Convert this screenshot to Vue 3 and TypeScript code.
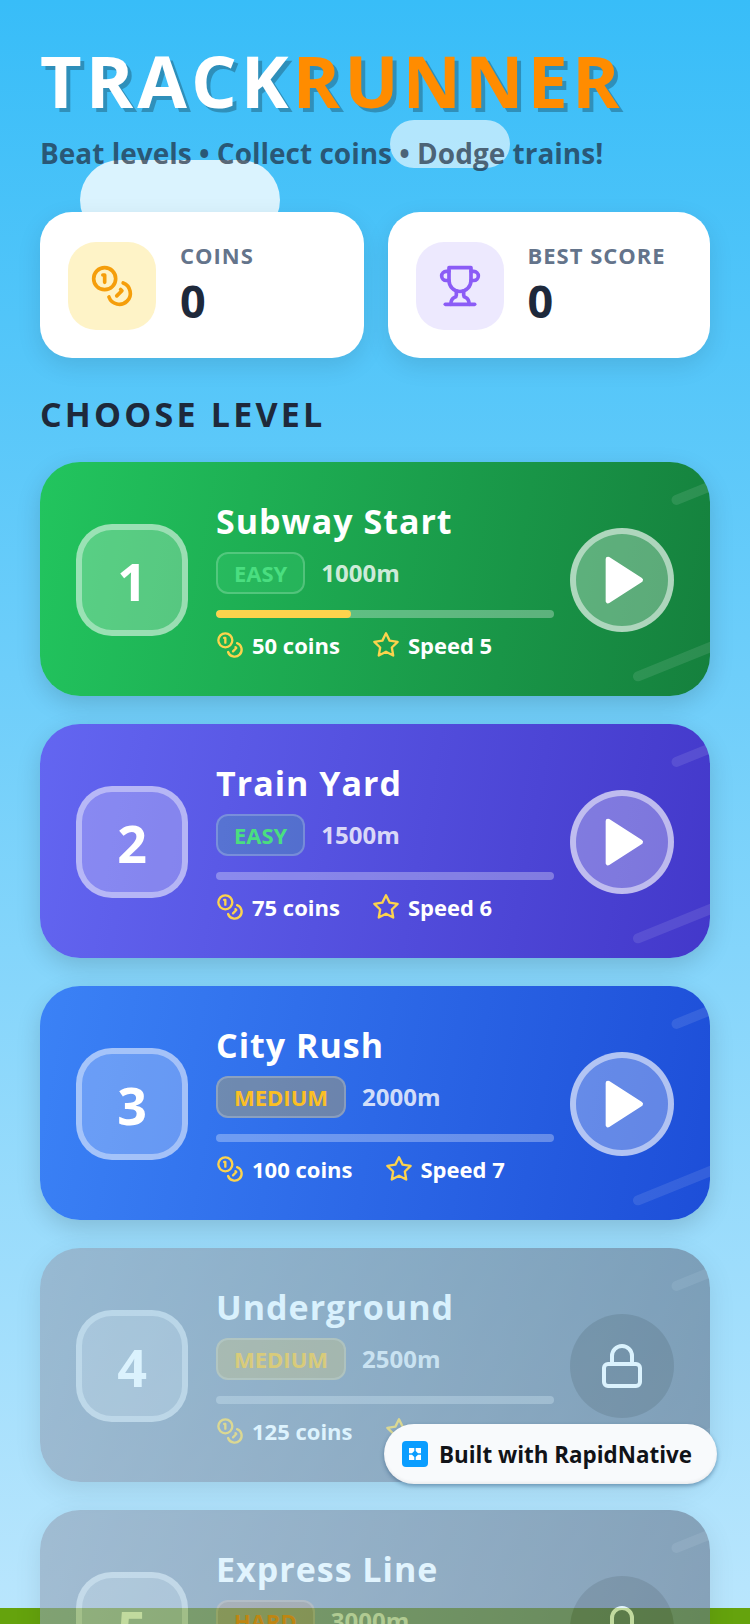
<template>
  <div class="screen">
    <div class="cloud cloud--big"></div>
    <div class="cloud cloud--small"></div>
    <div class="ground"></div>

    <div class="content">
      <header class="header">
        <h1 class="title">TRACK<span class="title__accent">RUNNER</span></h1>
        <p class="subtitle">Beat levels • Collect coins • Dodge trains!</p>
      </header>

      <section class="stats">
        <div class="stat stat--coins">
          <div class="stat__icon stat__icon--coins">
            <svg width="44" height="44" viewBox="0 0 24 24" fill="none" stroke="#f59e0b" stroke-width="2" stroke-linecap="round" stroke-linejoin="round">
              <circle cx="8" cy="8" r="6" />
              <path d="M18.09 10.37A6 6 0 1 1 10.34 18" />
              <path d="M7 6h1v4" />
              <path d="m16.71 13.88.7.71-2.82 2.82" />
            </svg>
          </div>
          <div>
            <div class="stat__label">COINS</div>
            <div class="stat__value">0</div>
          </div>
        </div>
        <div class="stat stat--best">
          <div class="stat__icon stat__icon--best">
            <svg width="44" height="44" viewBox="0 0 24 24" fill="none" stroke="#8b5cf6" stroke-width="2" stroke-linecap="round" stroke-linejoin="round">
              <path d="M6 9H4.5a2.5 2.5 0 0 1 0-5H6" />
              <path d="M18 9h1.5a2.5 2.5 0 0 0 0-5H18" />
              <path d="M4 22h16" />
              <path d="M10 14.66V17c0 .55-.47.98-.97 1.21C7.85 18.75 7 20.24 7 22" />
              <path d="M14 14.66V17c0 .55.47.98.97 1.21C16.15 18.75 17 20.24 17 22" />
              <path d="M18 2H6v7a6 6 0 0 0 12 0V2Z" />
            </svg>
          </div>
          <div>
            <div class="stat__label">BEST SCORE</div>
            <div class="stat__value">0</div>
          </div>
        </div>
      </section>

      <h2 class="section-title">CHOOSE LEVEL</h2>

      <section class="levels">
        <article
          v-for="level in levels"
          :key="level.id"
          class="level"
          :class="[`level--${level.theme}`, { 'level--locked': level.locked }]"
        >
          <span class="streak streak--top"></span>
          <span class="streak streak--bottom"></span>

          <div class="level__number">{{ level.id }}</div>

          <div class="level__info">
            <div class="level__name">{{ level.name }}</div>
            <div class="level__row">
              <span class="tag" :class="`tag--${level.difficulty.toLowerCase()}`">{{ level.difficulty }}</span>
              <span class="level__distance">{{ level.distance }}</span>
            </div>
            <div class="progress">
              <div class="progress__fill" :style="{ width: level.progress + '%' }"></div>
            </div>
            <div class="level__meta">
              <span class="meta">
                <svg width="28" height="28" viewBox="0 0 24 24" fill="none" stroke="#fcd34d" stroke-width="2" stroke-linecap="round" stroke-linejoin="round">
                  <circle cx="8" cy="8" r="6" />
                  <path d="M18.09 10.37A6 6 0 1 1 10.34 18" />
                  <path d="M7 6h1v4" />
                  <path d="m16.71 13.88.7.71-2.82 2.82" />
                </svg>
                {{ level.coins }} coins
              </span>
              <span class="meta">
                <svg width="28" height="28" viewBox="0 0 24 24" fill="none" stroke="#fcd34d" stroke-width="2" stroke-linecap="round" stroke-linejoin="round">
                  <polygon points="12 2 15.09 8.26 22 9.27 17 14.14 18.18 21.02 12 17.77 5.82 21.02 7 14.14 2 9.27 8.91 8.26 12 2" />
                </svg>
                Speed {{ level.speed }}
              </span>
            </div>
          </div>

          <div class="level__action">
            <svg v-if="level.locked" width="48" height="48" viewBox="0 0 24 24" fill="none" stroke="#fff" stroke-width="2" stroke-linecap="round" stroke-linejoin="round">
              <rect x="3" y="11" width="18" height="11" rx="2" ry="2" />
              <path d="M7 11V7a5 5 0 0 1 10 0v4" />
            </svg>
            <svg v-else width="56" height="56" viewBox="0 0 24 24" fill="#fff" stroke="#fff" stroke-width="2" stroke-linecap="round" stroke-linejoin="round">
              <polygon points="6 3 20 12 6 21 6 3" />
            </svg>
          </div>
        </article>
      </section>
    </div>

    <div class="built">
      <span class="built__logo">
        <svg width="26" height="26" viewBox="0 0 26 26">
          <rect width="26" height="26" rx="4" fill="#0a9dff" />
          <path d="M7 7h5.300v3L10 12.300H7ZM13.700 7H19v5.300h-3L13.700 10ZM7 13.700h3L12.300 16v3H7ZM16 13.700h3V19h-5.300v-3Z" fill="#fff" />
        </svg>
      </span>
      <span class="built__text">Built with RapidNative</span>
    </div>
  </div>
</template>

<script setup lang="ts">
interface Level {
  id: number
  name: string
  difficulty: 'EASY' | 'MEDIUM' | 'HARD'
  distance: string
  coins: number
  speed: number
  theme: string
  progress: number
  locked: boolean
}

const levels: Level[] = [
  { id: 1, name: 'Subway Start', difficulty: 'EASY', distance: '1000m', coins: 50, speed: 5, theme: 'green', progress: 40, locked: false },
  { id: 2, name: 'Train Yard', difficulty: 'EASY', distance: '1500m', coins: 75, speed: 6, theme: 'purple', progress: 0, locked: false },
  { id: 3, name: 'City Rush', difficulty: 'MEDIUM', distance: '2000m', coins: 100, speed: 7, theme: 'blue', progress: 0, locked: false },
  { id: 4, name: 'Underground', difficulty: 'MEDIUM', distance: '2500m', coins: 125, speed: 8, theme: 'gray', progress: 0, locked: true },
  { id: 5, name: 'Express Line', difficulty: 'HARD', distance: '3000m', coins: 150, speed: 9, theme: 'gray', progress: 0, locked: true },
]
</script>

<style>
html,
body {
  margin: 0;
  padding: 0;
}
</style>

<style scoped>
.screen {
  position: relative;
  width: 750px;
  height: 1624px;
  overflow: hidden;
  background: linear-gradient(180deg, #38bdf8 0%, #bae6fd 100%);
  font-family: "Open Sans", "Liberation Sans", sans-serif;
}

.cloud {
  position: absolute;
  background: rgba(255, 255, 255, 0.6);
}

.cloud--big {
  left: 80px;
  top: 160px;
  width: 200px;
  height: 80px;
  border-radius: 40px;
  background: rgba(255, 255, 255, 0.8);
}

.cloud--small {
  left: 390px;
  top: 120px;
  width: 120px;
  height: 48px;
  border-radius: 24px;
}

.ground {
  position: absolute;
  left: 0;
  right: 0;
  bottom: 0;
  height: 16px;
  background: #65a30d;
}

.content {
  position: relative;
  padding: 31px 40px 0;
}

.title {
  margin: 0;
  font-size: 72px;
  line-height: 98px;
  font-weight: 700;
  letter-spacing: 4px;
  color: #fff;
  text-shadow: 4px 4px 0 rgba(0, 0, 0, 0.25);
}

.title__accent {
  color: #ff8c00;
}

.subtitle {
  margin: 5px 0 0;
  font-size: 28px;
  line-height: 38px;
  font-weight: 700;
  color: rgba(30, 41, 59, 0.7);
}

.stats {
  display: flex;
  gap: 24px;
  margin-top: 40px;
}

.stat {
  display: flex;
  align-items: center;
  gap: 24px;
  height: 146px;
  box-sizing: border-box;
  padding: 2px 28px 0;
  background: #fff;
  border-radius: 32px;
  box-shadow: 0 8px 24px rgba(0, 0, 0, 0.1);
}

.stat--coins {
  width: 324px;
}

.stat--best {
  width: 322px;
  gap: 23.5px;
}

.stat__icon {
  display: flex;
  align-items: center;
  justify-content: center;
  flex: none;
  width: 88px;
  height: 88px;
  border-radius: 28px;
}

.stat__icon--coins {
  background: #fef3c7;
}

.stat__icon--best {
  background: #ede9fe;
}

.stat__label {
  margin-bottom: 1px;
  font-size: 22px;
  line-height: 30px;
  font-weight: 700;
  letter-spacing: 1px;
  color: #64748b;
}

.stat__value {
  margin-bottom: 1px;
  font-size: 45px;
  line-height: 60px;
  font-weight: 700;
  color: #1e293b;
}

.section-title {
  margin: 33px 0 0;
  font-size: 34px;
  line-height: 46px;
  font-weight: 700;
  letter-spacing: 3.2px;
  color: #1e293b;
}

.levels {
  display: flex;
  flex-direction: column;
  gap: 28px;
  margin-top: 25px;
}

.level {
  position: relative;
  display: flex;
  align-items: center;
  flex: none;
  height: 234px;
  box-sizing: border-box;
  padding: 0 36px;
  border-radius: 40px;
  overflow: hidden;
  color: #fff;
  box-shadow: 0 8px 24px rgba(0, 0, 0, 0.15);
}

.level--green {
  background: linear-gradient(100deg, #22c55e, #15803d);
}

.level--purple {
  background: linear-gradient(100deg, #6366f1, #4338ca);
}

.level--blue {
  background: linear-gradient(100deg, #3b82f6, #1d4ed8);
}

.level--gray {
  background: linear-gradient(100deg, #94a3b8, #64748b);
}

.level--locked {
  opacity: 0.6;
}

.streak {
  position: absolute;
  height: 10px;
  border-radius: 5px;
  background: rgba(255, 255, 255, 0.1);
  transform: rotate(-22deg);
}

.streak--top {
  right: -12px;
  top: 25px;
  width: 52px;
}

.streak--bottom {
  right: -12px;
  bottom: 30px;
  width: 92px;
}

.level__number {
  display: flex;
  align-items: center;
  justify-content: center;
  flex: none;
  width: 112px;
  height: 112px;
  box-sizing: border-box;
  margin-top: 2px;
  margin-right: 28px;
  border: 6px solid rgba(255, 255, 255, 0.4);
  border-radius: 36px;
  background: rgba(255, 255, 255, 0.25);
  font-size: 52px;
  font-weight: 700;
}

.level__info {
  flex: 1;
  min-width: 0;
}

.level__name {
  font-size: 34px;
  line-height: 50px;
  font-weight: 700;
  letter-spacing: 1px;
  white-space: nowrap;
}

.level__row {
  display: flex;
  align-items: center;
  gap: 16px;
  margin-top: 6px;
}

.tag {
  box-sizing: border-box;
  height: 42px;
  padding: 0 16px;
  border: 2px solid rgba(255, 255, 255, 0.2);
  border-radius: 12px;
  font-size: 22px;
  line-height: 38px;
  font-weight: 700;
}

.tag--easy {
  color: #4ade80;
  background: rgba(74, 222, 128, 0.2);
}

.tag--medium {
  color: #fbbf24;
  background: rgba(251, 191, 36, 0.3);
}

.tag--hard {
  color: #f97316;
  background: rgba(249, 115, 22, 0.2);
}

.level__distance {
  font-size: 24px;
  line-height: 34px;
  font-weight: 700;
  color: rgba(255, 255, 255, 0.8);
}

.progress {
  height: 8px;
  margin-top: 16px;
  border-radius: 4px;
  background: rgba(255, 255, 255, 0.3);
  overflow: hidden;
}

.progress__fill {
  height: 100%;
  border-radius: 4px;
  background: #fcd34d;
}

.level__meta {
  display: flex;
  align-items: center;
  gap: 32px;
  margin-top: 10px;
}

.meta {
  display: inline-flex;
  align-items: center;
  gap: 8px;
  font-size: 22px;
  line-height: 34px;
  font-weight: 700;
}

.level__action {
  display: flex;
  align-items: center;
  justify-content: center;
  flex: none;
  width: 104px;
  height: 104px;
  box-sizing: border-box;
  margin-top: 2px;
  margin-left: 16px;
  border: 6px solid rgba(255, 255, 255, 0.5);
  border-radius: 50%;
  background: rgba(255, 255, 255, 0.3);
}

.level--locked .level__action {
  border: none;
  background: rgba(0, 0, 0, 0.2);
}

.built {
  position: absolute;
  left: 384px;
  top: 1424px;
  display: flex;
  align-items: center;
  gap: 11px;
  box-sizing: border-box;
  width: 333px;
  height: 60px;
  padding: 0 18px;
  border-radius: 30px;
  background: #f8fafc;
  box-shadow: 0 2px 4px rgba(30, 70, 110, 0.45), inset 0 -2px 3px rgba(0, 0, 0, 0.05);
}

.built__logo {
  display: flex;
}

.built__text {
  font-size: 22.4px;
  font-weight: 700;
  color: #111318;
  white-space: nowrap;
}
</style>
